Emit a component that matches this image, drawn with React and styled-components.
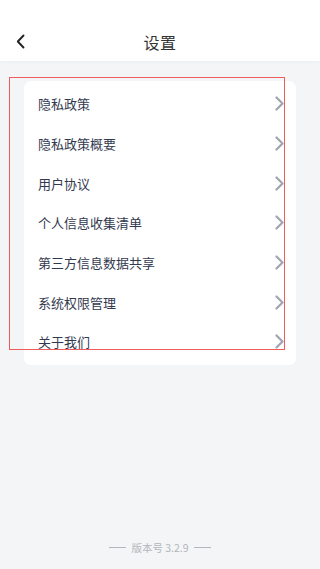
import React from "react"
import styled, { createGlobalStyle } from "styled-components"

const GlobalStyle = createGlobalStyle`
  html, body { margin: 0; padding: 0; }
  body {
    background: #f4f5f7;
    font-family: "Noto Sans CJK SC", "Noto Sans", sans-serif;
  }
`

const items = [
  "隐私政策",
  "隐私政策概要",
  "用户协议",
  "个人信息收集清单",
  "第三方信息数据共享",
  "系统权限管理",
  "关于我们",
]

const Chevron = ({ color = "#a1a5b1", size = 15, width = 1.5 }) => (
  <svg width={size * 0.6} height={size} viewBox="0 0 6 10" fill="none">
    <path d="M1 1l4 4-4 4" stroke={color} strokeWidth={width} strokeLinecap="round" strokeLinejoin="round" />
  </svg>
)

const App = () => {
  return (
    <Page>
      <GlobalStyle />
      <Header>
        <Back>
          <svg width="9" height="15" viewBox="0 0 9 15" fill="none">
            <path d="M7.5 1.5L1.8 7.5l5.7 6" stroke="#222" strokeWidth="1.9" strokeLinecap="round" strokeLinejoin="round" />
          </svg>
        </Back>
        <Title>设置</Title>
      </Header>
      <Body>
        <Card>
          {items.map((t) => (
            <Row key={t}>
              <Label>{t}</Label>
              <Chevron />
            </Row>
          ))}
        </Card>
        <Outline />
      </Body>
      <Footer>
        <Dash />
        <span>版本号 3.2.9</span>
        <Dash />
      </Footer>
    </Page>
  )
}
export default App

const Page = styled.div`
  height: 569px;
  display: flex;
  flex-direction: column;
  background: #f4f5f7;
  overflow: hidden;
`

const Header = styled.div`
  height: 61px;
  background: #fff;
  display: flex;
  align-items: center;
  justify-content: center;
  position: relative;
  padding-top: 22px;
  box-sizing: border-box;
  box-shadow: 0 1px 3px rgba(0, 0, 0, 0.03);
`

const Back = styled.div`
  position: absolute;
  left: 16px;
  top: 34px;
  display: flex;
`

const Title = styled.div`
  font-size: 16px;
  color: #333;
  letter-spacing: 0.5px;
`

const Body = styled.div`
  position: relative;
  padding: 20px 24px 0 24px;
  flex: 1;
`

const Card = styled.div`
  background: #fff;
  border-radius: 7px;
  padding: 3px 0 3px 0;
`

const Row = styled.div`
  height: 39.7px;
  display: flex;
  align-items: center;
  justify-content: space-between;
  padding: 0 12px 0 14px;
`

const Label = styled.div`
  font-size: 13px;
  color: #333a4f;
`

const Outline = styled.div`
  position: absolute;
  left: 9px;
  top: 16px;
  width: 276px;
  height: 273px;
  box-shadow: inset 0 0 0 1px rgb(238, 92, 92);
  pointer-events: none;
`

const Footer = styled.div`
  display: flex;
  justify-content: center;
  align-items: center;
  gap: 5px;
  padding-bottom: 14px;
  font-size: 10.5px;
  color: #b3b6bd;
`

const Dash = styled.div`
  width: 17px;
  height: 1px;
  background: #b3b6bd;
`
